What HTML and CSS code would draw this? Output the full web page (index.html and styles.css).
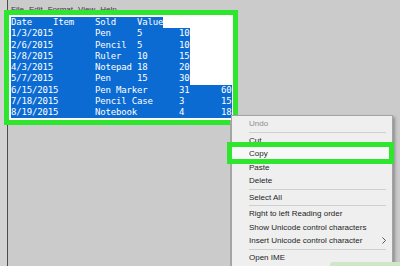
FILE: index.html
```
<!DOCTYPE html>
<html>
<head>
<meta charset="utf-8">
<link rel="stylesheet" href="styles.css">
</head>
<body>
<div class="window">
  <div class="menubar">
    <span>File</span><span>Edit</span><span>Format</span><span>View</span><span>Help</span>
  </div>
  <div class="doc">
    <div class="line"><span class="sel">Date    Item    Sold    Value</span></div>
    <div class="line"><span class="sel">1/3/2015        Pen     5       10</span></div>
    <div class="line"><span class="sel">2/6/2015        Pencil  5       10</span></div>
    <div class="line"><span class="sel">3/8/2015        Ruler   10      15</span></div>
    <div class="line"><span class="sel">4/3/2015        Notepad 18      20</span></div>
    <div class="line"><span class="sel">5/7/2015        Pen     15      30</span></div>
    <div class="line"><span class="sel">6/15/2015       Pen Marker      31      60</span></div>
    <div class="line"><span class="sel">7/18/2015       Pencil Case     3       15</span></div>
    <div class="line"><span class="sel">8/19/2015       Notebook        4       18</span></div>
  </div>
  <div class="below"></div>
</div>

<div class="ctxmenu">
  <div class="item disabled">Undo</div>
  <div class="sep"></div>
  <div class="item">Cut</div>
  <div class="item hover">Copy</div>
  <div class="item">Paste</div>
  <div class="item">Delete</div>
  <div class="sep"></div>
  <div class="item">Select All</div>
  <div class="sep"></div>
  <div class="item">Right to left Reading order</div>
  <div class="item">Show Unicode control characters</div>
  <div class="item sub">Insert Unicode control character
    <svg class="chev" width="4" height="7" viewBox="0 0 4 7"><path d="M0.5 0.5 L3.5 3.5 L0.5 6.5" fill="none" stroke="#555" stroke-width="1"/></svg>
  </div>
  <div class="sep"></div>
  <div class="item">Open IME</div>
  <div class="copybox"></div>
</div>
<div class="watermark"></div>
</body>
</html>
```

FILE: styles.css
```
html, body {
  margin: 0;
  padding: 0;
}
body {
  width: 400px;
  height: 266px;
  overflow: hidden;
  background: #d3d3d3;
  position: relative;
  font-family: "Liberation Sans", Arial, sans-serif;
}
.window {
  margin-left: 7px;
  height: 266px;
  border-left: 1px solid #4d4d4d;
  background: #cbcbcb;
  display: flex;
  flex-direction: column;
}
.menubar {
  height: 15px;
  flex: none;
  box-sizing: border-box;
  padding: 4px 0 0 3px;
  display: flex;
  gap: 5px;
  font-size: 8px;
  line-height: 11px;
  color: #3a3a3a;
}
.doc {
  flex: none;
  margin-left: 1px;
  width: 224px;
  height: 105px;
  box-sizing: border-box;
  padding: 2px 0 0 2px;
  background: #ffffff;
  outline: 5px solid #2fe62f;
  font-family: "DejaVu Sans Mono", monospace;
  font-size: 9px;
  letter-spacing: -0.168px;
}
.line {
  height: 11.25px;
  line-height: 11.25px;
}
.sel {
  display: inline-block;
  vertical-align: top;
  white-space: pre;
  height: 11.25px;
  background: #0b6bd3;
  color: #ffffff;
}
.below {
  flex: 1;
  width: 222px;
  border-right: 1px solid #a9a9a9;
}
.ctxmenu {
  position: absolute;
  left: 231px;
  top: 115px;
  width: 162px;
  height: 170px;
  box-sizing: border-box;
  padding-top: 1px;
  background: #efefef;
  border: 1px solid #a4a4a4;
  box-shadow: 2px 2px 3px rgba(0, 0, 0, 0.3);
  font-size: 8px;
  color: #1e1e1e;
}
.item {
  height: 13.5px;
  line-height: 13.5px;
  padding-left: 17px;
  display: flex;
  align-items: center;
  white-space: nowrap;
}
.item.disabled {
  color: #8d8d8d;
}
.item.hover {
  background: #f8f8f8;
}
.item.sub {
  justify-content: space-between;
  padding-right: 6px;
}
.sep {
  height: 3px;
  display: flex;
  align-items: center;
  margin: 0 6px 0 17px;
}
.sep::before {
  content: "";
  flex: 1;
  height: 1px;
  background: #cfcfcf;
}
.copybox {
  position: absolute;
  left: -5px;
  top: 26px;
  width: 167px;
  height: 22px;
  box-sizing: border-box;
  border: 5px solid #2fe62f;
}
.watermark {
  position: absolute;
  left: 330px;
  top: 262px;
  width: 70px;
  height: 6px;
  background: #cfe6c8;
  border-radius: 3px 0 0 0;
}
```
